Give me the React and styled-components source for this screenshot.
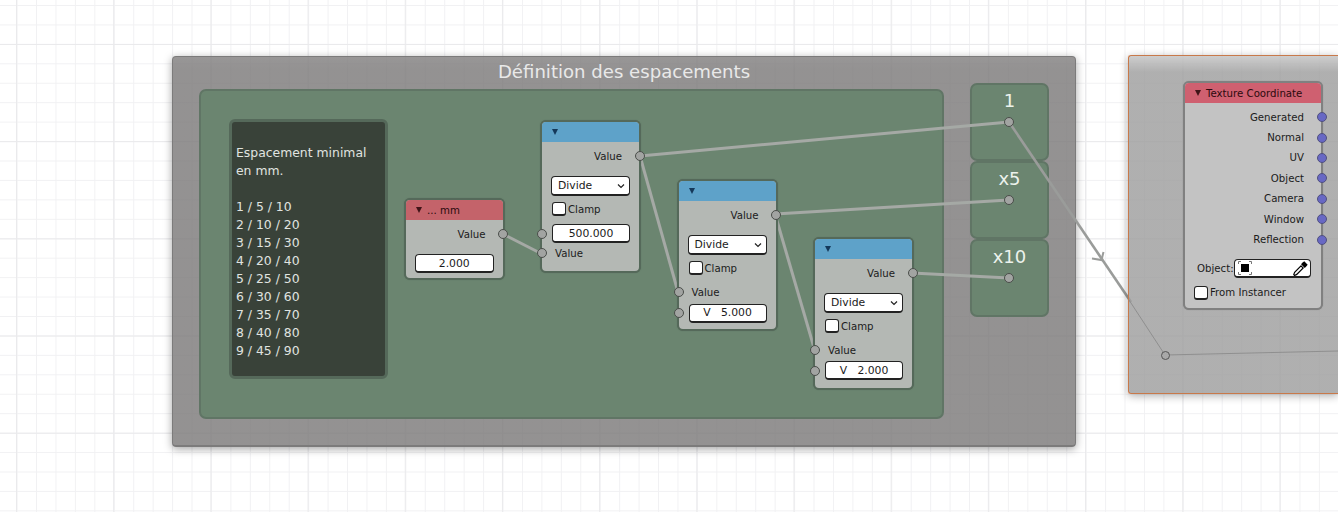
import React from 'react';
import styled, { createGlobalStyle } from 'styled-components';

const Global = createGlobalStyle`
  html, body { margin: 0; padding: 0; background: #fff; overflow: hidden; }
  body { font-family: "DejaVu Sans", sans-serif; }
`;

const Canvas = styled.div`
  position: relative;
  width: 1338px;
  height: 512px;
  overflow: hidden;
  background-color: #fff;
  background-image:
    linear-gradient(to right, #eaeaec 1px, transparent 1px),
    linear-gradient(to bottom, #eaeaec 1px, transparent 1px),
    linear-gradient(to right, #f1f1f3 1px, transparent 1px),
    linear-gradient(to bottom, #f1f1f3 1px, transparent 1px);
  background-size: 97.2px 97.2px, 97.2px 97.2px, 19.44px 19.44px, 19.44px 19.44px;
  background-position: 16px 0, 0 44px, 16.6px 0, 0 5px;
`;

const Placed = styled.div`
  position: absolute;
  left: ${p => p.$x}px;
  top: ${p => p.$y}px;
  width: ${p => p.$w}px;
  height: ${p => p.$h}px;
  box-sizing: border-box;
`;

const OuterFrame = styled(Placed)`
  border-radius: 4px;
  border: 1px solid #7c7b7b;
  border-bottom-width: 2px;
  background: linear-gradient(to bottom, rgba(134,132,132,.85) 0, rgba(124,122,122,.82) 12px);
  box-shadow: 0 2px 9px rgba(0,0,0,.36);
  display: flex;
  justify-content: center;
`;

const FrameTitle = styled.div`
  margin-top: 3px;
  color: #e9e9e9;
  font-size: 18.1px;
  line-height: 24px;
`;

const GreenFrame = styled(Placed)`
  border-radius: 7px;
  border: 2px solid #607565;
  background: #6b8570;
`;

const ValueFrame = styled(GreenFrame)`
  display: flex;
  justify-content: center;
  color: #ecf2ec;
  font-size: 18px;
  line-height: 24px;
  padding-top: 4px;
`;

const NoteFrame = styled(Placed)`
  border-radius: 6px;
  border: 3px solid #55695a;
  background: #394239;
  color: #e0e4e0;
  font-size: 12.4px;
  line-height: 18px;
  padding: 22px 0 0 4px;
  white-space: pre;
`;

const OrangeFrame = styled(Placed)`
  border: 1px solid #c8794a;
  border-right: 0;
  border-radius: 3px 0 0 3px;
  background: linear-gradient(to bottom, rgba(200,200,200,.9) 0, rgba(158,158,158,.82) 16px);
  box-shadow: 0 2px 9px rgba(0,0,0,.32);
`;

const Node = styled(Placed)`
  display: flex;
  flex-direction: column;
  border: 2px solid ${p => p.$edge || '#55695a'};
  box-shadow: 0 0 1px ${p => p.$edge || '#55695a'};
  border-radius: 6px;
  background: ${p => p.$body || '#b4b8b4'};
  color: #1b1b1b;
  font-size: 10.2px;
`;

const NodeHeader = styled.div`
  flex: 0 0 20px;
  display: flex;
  align-items: center;
  gap: 5px;
  padding-left: 10px;
  box-sizing: border-box;
  background: ${p => p.$color};
  border-radius: 4px 4px 0 0;
  color: #2b0a0e;
  margin-bottom: ${p => p.$gap ?? 4}px;
`;

const Arrow = styled.span`
  width: 0;
  height: 0;
  border-left: 3px solid transparent;
  border-right: 3px solid transparent;
  border-top: 6px solid ${p => p.$color};
`;

const Row = styled.div`
  position: relative;
  flex: 0 0 ${p => p.$h ?? 20}px;
  display: flex;
  align-items: center;
  margin-top: ${p => p.$top ?? 0}px;
  padding: ${p => (p.$out ? `0 ${p.$pad ?? 17}px 0 0` : `0 0 0 ${p.$pad ?? 13}px`)};
  box-sizing: border-box;
  justify-content: ${p => (p.$out ? 'flex-end' : 'flex-start')};
`;

const Socket = styled.span`
  position: absolute;
  top: 50%;
  ${p => (p.$out ? 'right: -5.7px;' : 'left: -5px;')}
  width: 10px;
  height: 10px;
  margin-top: -5px;
  box-sizing: border-box;
  border-radius: 50%;
  border: 1px solid ${p => (p.$vector ? '#50507f' : '#4a4e4a')};
  background: ${p => (p.$vector ? '#6868c4' : '#a2a4a2')};
  z-index: 3;
`;

const Field = styled.div`
  flex: 1;
  margin: ${p => p.$margin || '0 9px'};
  height: ${p => p.$h ?? 19}px;
  box-sizing: border-box;
  display: flex;
  align-items: center;
  justify-content: center;
  background: #fff;
  border: 1px solid #222;
  border-bottom-width: 2px;
  border-radius: 4px;
  white-space: pre;
  font-size: 10.8px;
`;

const SelectBox = styled(Field)`
  justify-content: space-between;
  padding: 0 4px 0 6px;
`;

const CheckBox = styled.span`
  width: 14px;
  height: 14px;
  box-sizing: border-box;
  background: #fff;
  border: 1px solid #222;
  border-bottom-width: 2px;
  border-radius: 3px;
  margin-right: 2px;
`;

const Links = styled.svg`
  position: absolute;
  left: 0;
  top: 0;
  width: 1338px;
  height: 512px;
  pointer-events: none;
  z-index: ${p => p.$z ?? 0};
`;

const ValueSocket = styled(Placed)`
  border-radius: 50%;
  border: 1px solid #4a4e4a;
  background: #a2a4a2;
  z-index: 3;
`;

const RerouteSocket = styled(ValueSocket)`
  background: #a9a9a9;
  border-color: #555;
`;

const ObjectInner = styled.div`
  flex: 1;
  display: flex;
  align-items: center;
  justify-content: space-between;
  padding: 0 2px 0 3px;
`;

const Chevron = () => (
  <svg width="8" height="6" viewBox="0 0 8 6">
    <path d="M1 1.5 L4 4.5 L7 1.5" fill="none" stroke="#222" strokeWidth="1.2" />
  </svg>
);

const ObjectIcon = () => (
  <svg width="14" height="14" viewBox="0 0 14 14">
    <rect x="3" y="3" width="8" height="8" fill="#000" />
    <path d="M0.5 3 V0.5 H3 M11 0.5 H13.5 V3 M13.5 11 V13.5 H11 M3 13.5 H0.5 V11" fill="none" stroke="#777" strokeWidth="1" />
  </svg>
);

const Dropper = () => (
  <svg width="15" height="15" viewBox="0 0 14 14">
    <path d="M9 1.5 L10.5 0.3 L13.7 3.5 L12.5 5 L11 6.5 L7.5 3 Z" fill="#000" />
    <path d="M7.5 4.5 L9.5 6.5 L3.5 12.5 L1.5 13.5 L0.7 12.7 L1.5 10.5 Z" fill="#fff" stroke="#000" strokeWidth="1.1" />
  </svg>
);

const DivideNode = ({ x, y, h, field, fieldFirst, fieldTop }) => {
  const value = <Row key="v"><Socket />Value</Row>;
  const input = (
    <Row key="f" $h={19} $pad={1} $top={fieldTop}>
      <Socket />
      <Field>{field}</Field>
    </Row>
  );
  return (
    <Node $x={x} $y={y} $w={101} $h={h}>
      <NodeHeader $color="#5ea2c9"><Arrow $color="#14385a" /></NodeHeader>
      <Row $out><Socket $out />Value</Row>
      <Row $top={10} $pad={0}><SelectBox $h={20}>Divide<Chevron /></SelectBox></Row>
      <Row $top={3} $pad={10}><CheckBox />Clamp</Row>
      <Row $h={fieldFirst ? 5 : 4} />
      {fieldFirst ? [input, value] : [value, input]}
    </Node>
  );
};

const textureOutputs = ['Generated', 'Normal', 'UV', 'Object', 'Camera', 'Window', 'Reflection'];

const note = `Espacement minimal
en mm.

1 / 5 / 10
2 / 10 / 20
3 / 15 / 30
4 / 20 / 40
5 / 25 / 50
6 / 30 / 60
7 / 35 / 70
8 / 40 / 80
9 / 45 / 90`;

const linkColor = '#a5a9a5';

export default function App() {
  return (
    <Canvas>
      <Global />
      <OuterFrame $x={172} $y={56} $w={904} $h={391}>
        <FrameTitle>Définition des espacements</FrameTitle>
      </OuterFrame>
      <GreenFrame $x={199} $y={89} $w={745} $h={330} />
      <ValueFrame $x={970} $y={83} $w={79} $h={78}>1</ValueFrame>
      <ValueFrame $x={970} $y={161} $w={79} $h={78}>x5</ValueFrame>
      <ValueFrame $x={970} $y={239} $w={79} $h={78}>x10</ValueFrame>
      <NoteFrame $x={229} $y={119} $w={159} $h={260}>{note}</NoteFrame>

      <Links viewBox="0 0 1338 512">
        <g fill="none" stroke={linkColor} strokeWidth="3">
          <path d="M503 234 L542 254" />
          <path d="M640 156 L1009 122" />
          <path d="M640 156 L678 292" />
          <path d="M775 214 L1009 200" />
          <path d="M775 214 L815 351" />
          <path d="M912 273 L1009 278" />
          <path d="M1009 122 L1131 302" stroke="#9a9c9a" strokeWidth="2.6" />
          <path d="M1092 258.5 L1101.5 260 L1103.5 252" stroke="#9a9c9a" strokeWidth="2" />
        </g>
      </Links>

      <OrangeFrame $x={1128} $y={55} $w={210} $h={339} />
      <Links $z={1} viewBox="0 0 1338 512">
        <g fill="none" stroke="#8f8f8f" strokeWidth="1">
          <path d="M1129 300 L1165 355" />
          <path d="M1165 355 L1338 351" />
        </g>
      </Links>
      <RerouteSocket $x={1160.5} $y={351} $w={9} $h={9} />

      <ValueSocket $x={1004} $y={117} $w={10} $h={10} />
      <ValueSocket $x={1004} $y={195} $w={10} $h={10} />
      <ValueSocket $x={1004} $y={273} $w={10} $h={10} />

      <Node $x={404} $y={198} $w={100.5} $h={82}>
        <NodeHeader $color="#c4636a"><Arrow $color="#401418" />... mm</NodeHeader>
        <Row $out><Socket $out />Value</Row>
        <Row $top={10} $h={19} $pad={0}><Field>2.000</Field></Row>
      </Node>

      <DivideNode x={540} y={120} h={153} field="500.000" fieldFirst fieldTop={0} />
      <DivideNode x={676.5} y={179} h={152} field="V   5.000" fieldTop={1.5} />
      <DivideNode x={813} y={237} h={153} field="V   2.000" fieldTop={1} />

      <Node $x={1183} $y={81} $w={140} $h={229} $edge="#808080" $body="#c3c3c3">
        <NodeHeader $color="#cf6070" $gap={4}><Arrow $color="#401418" />Texture Coordinate</NodeHeader>
        {textureOutputs.map(label => (
          <Row $out $pad={17} $h={20.4} key={label}>
            <Socket $out $vector />
            {label}
          </Row>
        ))}
        <Row $top={9} $pad={12}>
          Object:
          <Field $margin="0 10px 0 0" $h={19}>
            <ObjectInner>
              <ObjectIcon />
              <Dropper />
            </ObjectInner>
          </Field>
        </Row>
        <Row $top={4} $pad={9}><CheckBox />From Instancer</Row>
      </Node>
    </Canvas>
  );
}
